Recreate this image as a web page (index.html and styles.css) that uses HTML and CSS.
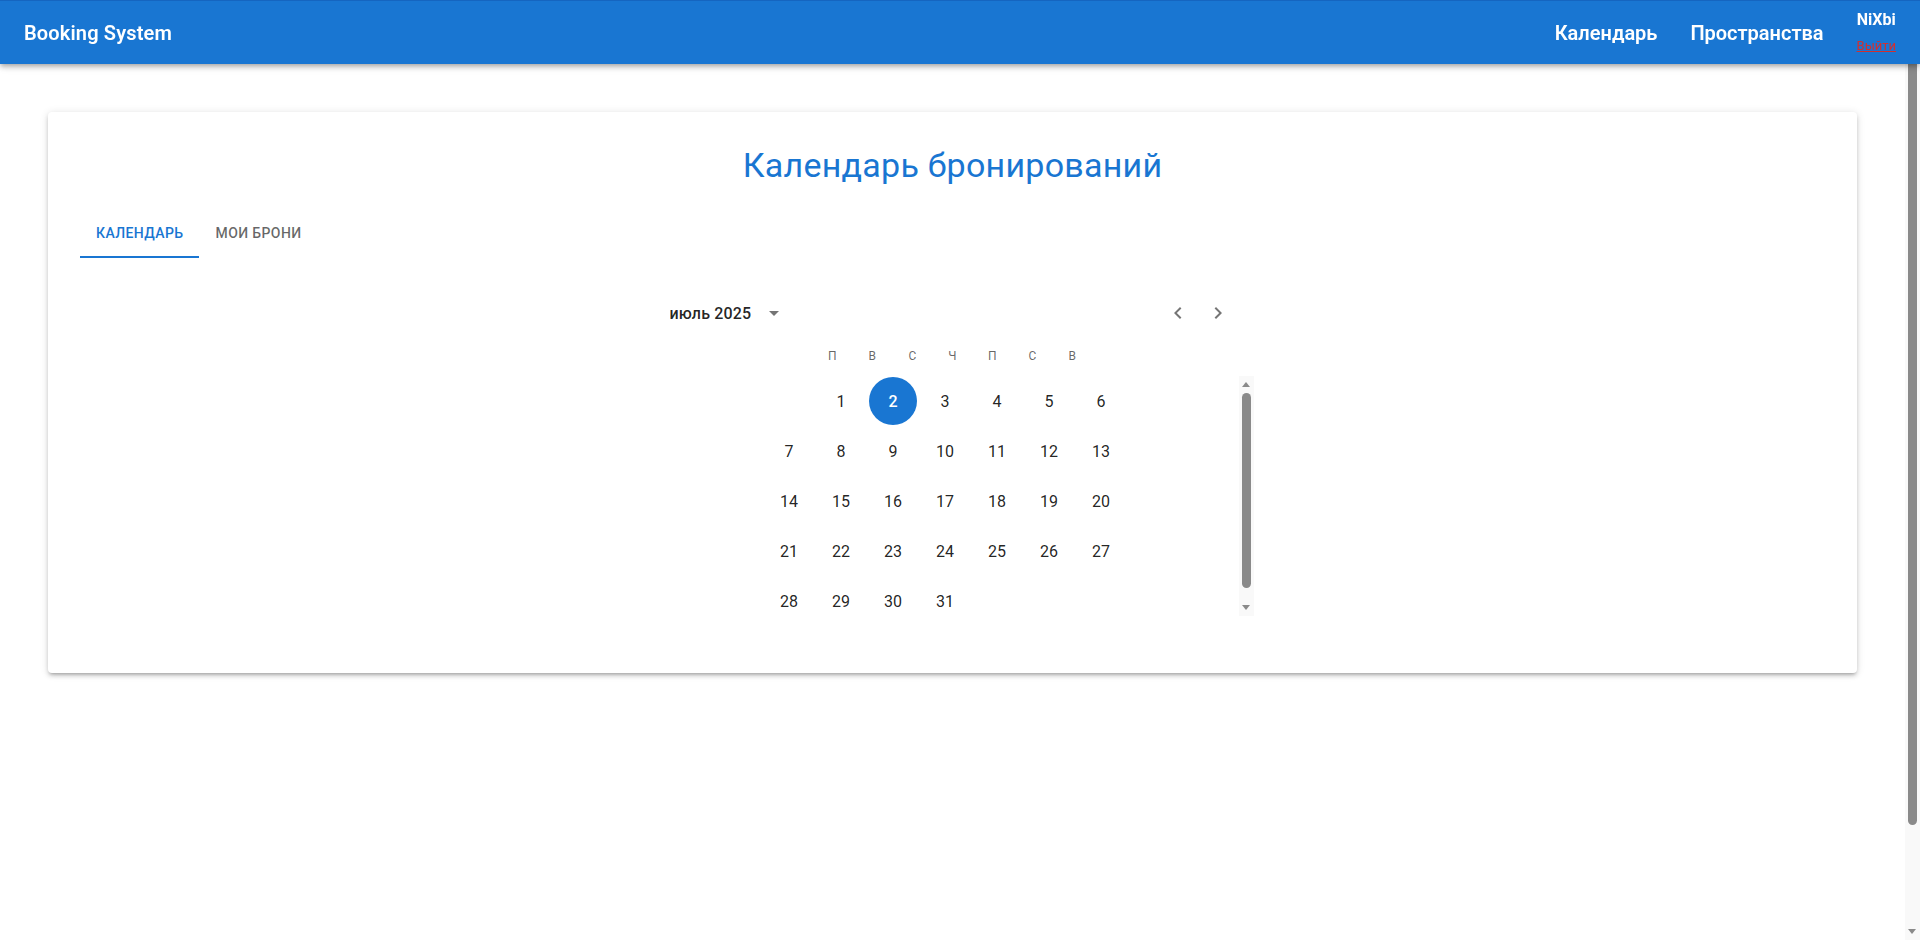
FILE: index.html
```html
<!DOCTYPE html>
<html lang="ru">
<head>
<meta charset="utf-8">
<title>Booking System</title>
<link rel="stylesheet" href="styles.css">
</head>
<body>
<div class="app">
  <header class="appbar">
    <div class="brand">Booking System</div>
    <nav class="nav">
      <a class="nav-link" href="#">Календарь</a>
      <a class="nav-link" href="#">Пространства</a>
      <div class="user">
        <div class="user-name">NiXbi</div>
        <a class="logout" href="#">Выйти</a>
      </div>
    </nav>
  </header>
  <main class="page">
    <section class="card">
      <h1 class="title">Календарь бронирований</h1>
      <div class="tabs">
        <button class="tab tab-active">Календарь</button>
        <button class="tab">Мои брони</button>
      </div>
      <div class="calendar">
        <div class="cal-header">
          <div class="cal-label">июль 2025</div>
          <button class="icon-btn view-btn" aria-label="view">
            <svg viewBox="0 0 24 24" width="24" height="24"><path d="M7 10l5 5 5-5z"/></svg>
          </button>
          <div class="cal-arrows">
            <button class="icon-btn" aria-label="prev">
              <svg viewBox="0 0 24 24" width="24" height="24"><path d="M15.41 16.59 10.83 12l4.58-4.59L14 6l-6 6 6 6 1.41-1.41z"/></svg>
            </button>
            <button class="icon-btn" aria-label="next">
              <svg viewBox="0 0 24 24" width="24" height="24"><path d="M8.59 16.59 13.17 12 8.59 7.41 10 6l6 6-6 6-1.41-1.41z"/></svg>
            </button>
          </div>
        </div>
        <div class="weekdays">
          <span class="weekday">П</span><span class="weekday">В</span><span class="weekday">С</span><span class="weekday">Ч</span><span class="weekday">П</span><span class="weekday">С</span><span class="weekday">В</span>
        </div>
        <div class="month-wrap">
          <div class="month">
            <div class="week">
              <span class="day day-empty"></span><span class="day">1</span><span class="day day-selected">2</span><span class="day">3</span><span class="day">4</span><span class="day">5</span><span class="day">6</span>
            </div>
            <div class="week">
              <span class="day">7</span><span class="day">8</span><span class="day">9</span><span class="day">10</span><span class="day">11</span><span class="day">12</span><span class="day">13</span>
            </div>
            <div class="week">
              <span class="day">14</span><span class="day">15</span><span class="day">16</span><span class="day">17</span><span class="day">18</span><span class="day">19</span><span class="day">20</span>
            </div>
            <div class="week">
              <span class="day">21</span><span class="day">22</span><span class="day">23</span><span class="day">24</span><span class="day">25</span><span class="day">26</span><span class="day">27</span>
            </div>
            <div class="week">
              <span class="day">28</span><span class="day">29</span><span class="day">30</span><span class="day">31</span><span class="day day-empty"></span><span class="day day-empty"></span><span class="day day-empty"></span>
            </div>
          </div>
          <div class="vscroll">
            <span class="sb-arrow sb-up"></span>
            <div class="sb-track"><div class="sb-thumb month-thumb"></div></div>
            <span class="sb-arrow sb-down"></span>
          </div>
        </div>
      </div>
    </section>
  </main>
  <div class="vscroll page-vscroll">
    <span class="sb-arrow sb-up"></span>
    <div class="sb-track"><div class="sb-thumb page-thumb"></div></div>
    <span class="sb-arrow sb-down"></span>
  </div>
</div>
</body>
</html>
```

FILE: styles.css
```css
* { box-sizing: border-box; }

html, body {
  margin: 0;
  padding: 0;
  height: 100%;
  overflow: hidden;
  font-family: Roboto, "Noto Sans", "Liberation Sans", sans-serif;
  color: rgba(0, 0, 0, 0.87);
  background: #fff;
}

.app {
  height: 100vh;
  display: flex;
  overflow: hidden;
}

/* ---------- App bar ---------- */
.appbar {
  position: fixed;
  top: 0;
  left: 0;
  right: 0;
  z-index: 1100;
  height: 64px;
  padding: 0 24px;
  display: flex;
  align-items: center;
  justify-content: space-between;
  background: #1976d2;
  color: #fff;
  border-top: 1px solid #1565c0;
  box-shadow: 0 2px 4px -1px rgba(0,0,0,0.2), 0 4px 5px 0 rgba(0,0,0,0.14), 0 1px 10px 0 rgba(0,0,0,0.12);
}

.brand {
  font-size: 20px;
  font-weight: 600;
  letter-spacing: 0.15px;
}

.nav {
  display: flex;
  align-items: center;
  gap: 33px;
}

.nav-link {
  color: #fff;
  text-decoration: none;
  font-size: 20px;
  font-weight: 600;
}

.user {
  display: flex;
  flex-direction: column;
  align-items: center;
  gap: 9px;
  margin-top: -2px;
}

.user-name {
  font-size: 16px;
  font-weight: 700;
  line-height: 18px;
}

.logout {
  font-size: 13px;
  line-height: 15px;
  color: #d32f2f;
  text-decoration: underline;
}

/* ---------- Page ---------- */
.page {
  flex: 1;
  min-width: 0;
  padding: 112px 48px 48px;
}

.card {
  background: #fff;
  border-radius: 4px;
  padding: 32px;
  box-shadow: 0 3px 3px -2px rgba(0,0,0,0.2), 0 3px 4px 0 rgba(0,0,0,0.14), 0 1px 8px 0 rgba(0,0,0,0.12);
}

.title {
  margin: 0 0 24px;
  text-align: center;
  color: #1976d2;
  font-size: 34px;
  font-weight: 400;
  line-height: 42px;
  letter-spacing: 0.25px;
}

.tabs {
  display: flex;
  height: 48px;
}

.tab {
  min-width: 90px;
  height: 48px;
  padding: 12px 16px;
  border: 0;
  border-bottom: 2px solid transparent;
  background: none;
  font-family: inherit;
  font-size: 14px;
  font-weight: 500;
  letter-spacing: 0.4px;
  text-transform: uppercase;
  color: rgba(0, 0, 0, 0.6);
  cursor: pointer;
}

.tab-active {
  color: #1976d2;
  border-bottom-color: #1976d2;
}

/* ---------- Calendar ---------- */
.calendar {
  width: 612px;
  margin: 40px auto 0;
}

.cal-header {
  display: flex;
  align-items: center;
  height: 30px;
  padding: 0 21px 0 23px;
}

.cal-label {
  font-size: 16px;
  font-weight: 500;
  letter-spacing: 0.15px;
  margin-right: 6px;
}

.icon-btn {
  display: flex;
  align-items: center;
  justify-content: center;
  width: 40px;
  height: 30px;
  padding: 0;
  border: 0;
  background: none;
  cursor: pointer;
}

.icon-btn svg { fill: rgba(0, 0, 0, 0.54); }

.view-btn {
  width: 34px;
  justify-content: flex-start;
  padding-left: 5px;
}

.cal-arrows {
  display: flex;
  margin-left: auto;
}

.weekdays {
  display: flex;
  justify-content: center;
  height: 40px;
  margin-top: 8px;
  align-items: center;
}

.weekday {
  width: 36px;
  margin: 0 2px;
  text-align: center;
  font-size: 12px;
  line-height: 20px;
  letter-spacing: 0.4px;
  color: rgba(0, 0, 0, 0.6);
}

.month-wrap {
  display: flex;
  width: 602px;
  height: 240px;
  margin: 0 auto 25px;
}

.month {
  flex: 1;
  min-width: 0;
}

.week {
  display: flex;
  justify-content: center;
}

.day {
  width: 48px;
  height: 48px;
  margin: 1px 2px;
  border-radius: 50%;
  display: flex;
  align-items: center;
  justify-content: center;
  font-size: 16px;
  color: rgba(0, 0, 0, 0.87);
}

.day-selected {
  background: #1976d2;
  color: #fff;
  font-weight: 500;
}

/* ---------- Scrollbars (drawn) ---------- */
.vscroll {
  width: 15px;
  flex: none;
  display: flex;
  flex-direction: column;
  align-items: center;
  background: #f9f9f9;
}

.page-vscroll { height: 100vh; }

.sb-arrow {
  width: 15px;
  height: 15px;
  flex: none;
  position: relative;
}

.sb-arrow::after {
  content: "";
  position: absolute;
  left: 3px;
  border-left: 4.5px solid transparent;
  border-right: 4.5px solid transparent;
}

.sb-up::after {
  top: 6px;
  border-bottom: 5px solid #8a8a8a;
}

.sb-down::after {
  top: 4px;
  border-top: 5px solid #8a8a8a;
}

.sb-track {
  flex: 1;
  width: 15px;
  padding: 2px 3px;
}

.sb-thumb {
  width: 9px;
  border-radius: 4.5px;
  background: #8a8a8a;
}

.month-thumb { height: 195px; }
.page-thumb { height: 808px; }
```
